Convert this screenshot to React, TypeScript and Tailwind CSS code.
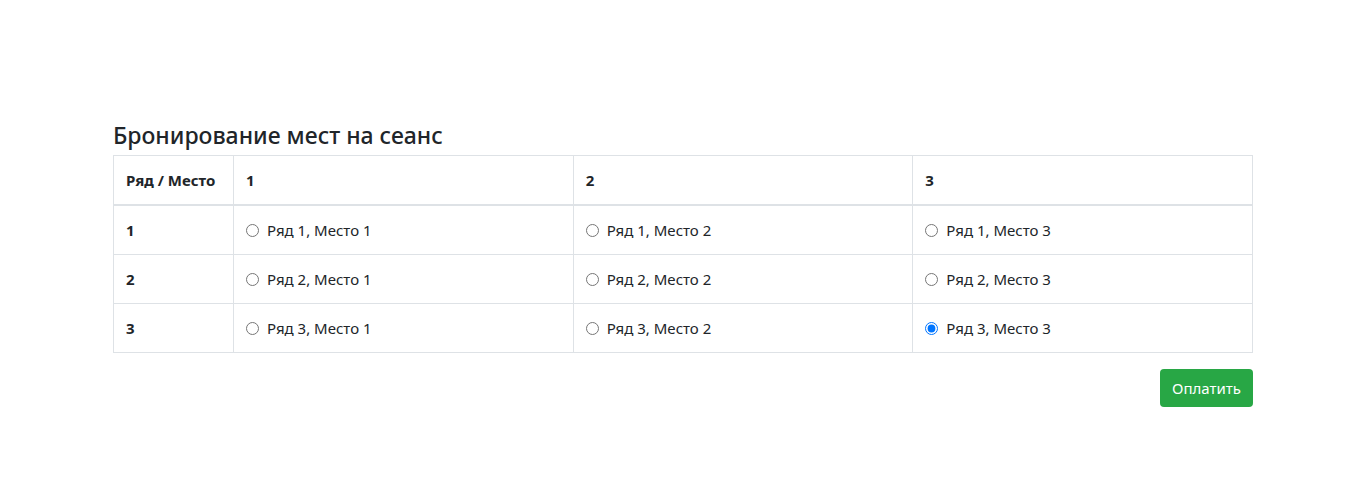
import { useState } from "react";

const rows = [1, 2, 3];
const seats = [1, 2, 3];

export default function App() {
  const [picked, setPicked] = useState("3-3");

  return (
    <div className="min-h-[480px] bg-white text-[#212529] font-['Noto_Sans',sans-serif] text-[15px]">
      <div className="w-[1140px] mx-auto pt-[121px]">
        <h4 className="text-[23px] font-medium leading-[1.25] mb-[5px]">Бронирование мест на сеанс</h4>

        <table className="w-full border-collapse border border-[#dee2e6] mb-4 table-fixed">
          <colgroup>
            <col className="w-[120px]" />
            <col />
            <col />
            <col />
          </colgroup>
          <thead>
            <tr>
              <th className="border border-[#dee2e6] border-b-2 px-3 py-3 text-left font-bold leading-6 h-[50px]">Ряд / Место</th>
              {seats.map((s) => (
                <th key={s} className="border border-[#dee2e6] border-b-2 px-3 py-3 text-left font-bold leading-6 h-[50px]">
                  {s}
                </th>
              ))}
            </tr>
          </thead>
          <tbody>
            {rows.map((r) => (
              <tr key={r}>
                <td className="border border-[#dee2e6] px-3 py-3 font-bold leading-6 h-[49px]">{r}</td>
                {seats.map((s) => {
                  const id = `${r}-${s}`;
                  return (
                    <td key={s} className="border border-[#dee2e6] px-3 py-3 leading-6 h-[49px]">
                      <label className="flex h-6 items-center gap-2 cursor-pointer">
                        <input
                          type="radio"
                          name="seat"
                          checked={picked === id}
                          onChange={() => setPicked(id)}
                          className="m-0 w-[13px] h-[13px] accent-[#0075ff]"
                        />
                        <span>
                          Ряд {r}, Место {s}
                        </span>
                      </label>
                    </td>
                  );
                })}
              </tr>
            ))}
          </tbody>
        </table>

        <div className="flex justify-end">
          <button className="bg-[#28a745] text-white rounded px-3 py-1.5 leading-[26px] text-[15px]">Оплатить</button>
        </div>
      </div>
    </div>
  );
}
